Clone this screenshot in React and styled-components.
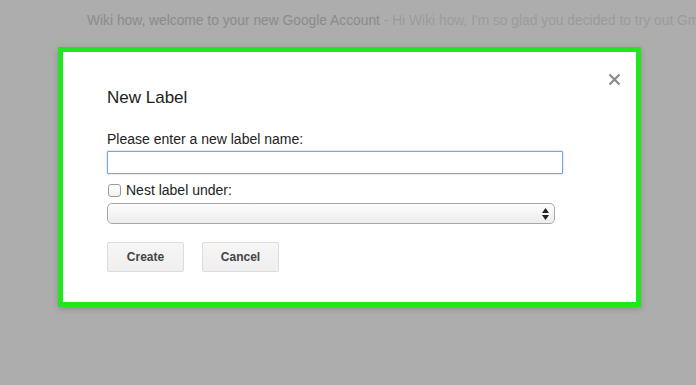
import React from 'react';
import styled, { createGlobalStyle } from 'styled-components';

const GlobalStyle = createGlobalStyle`
	html, body {
		margin: 0;
		padding: 0;
		background: #adadad;
	}
	* {
		box-sizing: border-box;
	}
`;

const Page = styled.div`
	width: 696px;
	height: 385px;
	overflow: hidden;
	background: #adadad;
	font-family: "Liberation Sans", Arial, sans-serif;
`;

const InboxRow = styled.div`
	height: 41px;
	padding: 13px 0 0 87px;
	font-size: 13.8px;
	line-height: 16px;
	white-space: nowrap;
	overflow: hidden;
	border-bottom: 1px solid #a9aea9;
`;

const Subject = styled.span`
	color: #8b8b8b;
`;

const Snippet = styled.span`
	color: #9b9b9b;
`;

const Dialog = styled.div`
	position: relative;
	width: 583px;
	height: 260px;
	margin: 6px 0 0 58px;
	border: 5px solid #1fe61f;
	background: #fff;
	padding: 36px 44px 0;
	box-shadow: 0 2px 6px rgba(0, 0, 0, 0.18);
`;

const Close = styled.button`
	position: absolute;
	top: 19px;
	right: 14px;
	width: 16px;
	height: 16px;
	padding: 0;
	border: none;
	background: none;
	display: flex;
	align-items: center;
	justify-content: center;
`;

const Title = styled.h2`
	margin: 0;
	font-size: 17px;
	line-height: 20px;
	font-weight: normal;
	color: #222;
`;

const FieldLabel = styled.div`
	margin-top: 23px;
	font-size: 14px;
	line-height: 16px;
	color: #222;
`;

const NameInput = styled.input`
	display: block;
	width: 456px;
	height: 23px;
	margin-top: 4px;
	border: 1px solid #78a5e0;
	border-radius: 1px;
	box-shadow: 0 0 2px rgba(110, 160, 230, 0.7);
	outline: none;
	background: #fff;
`;

const CheckRow = styled.label`
	display: flex;
	align-items: center;
	gap: 5px;
	height: 16px;
	margin-top: 8px;
	font-size: 14px;
	line-height: 16px;
	color: #222;
`;

const CheckBox = styled.span`
	width: 13px;
	height: 13px;
	margin-left: 1px;
	border: 1px solid #9a9a9a;
	border-radius: 3px;
	background: linear-gradient(#fff, #f1f1f1);
`;

const SelectBox = styled.div`
	display: flex;
	align-items: center;
	justify-content: flex-end;
	width: 448px;
	height: 21px;
	margin-top: 5px;
	padding-right: 5px;
	border: 1px solid #a8a8a8;
	border-radius: 5px;
	background: linear-gradient(#fdfdfd, #ececec);
`;

const Buttons = styled.div`
	display: flex;
	gap: 18px;
	margin-top: 18px;
`;

const Button = styled.button`
	width: 77px;
	height: 30px;
	padding: 0;
	border: 1px solid #dcdcdc;
	border-radius: 2px;
	background: linear-gradient(#f6f6f6, #efefef);
	font-family: "Liberation Sans", Arial, sans-serif;
	font-size: 12px;
	font-weight: bold;
	color: #444;
`;

const App = () => {
	return (
		<Page>
			<GlobalStyle />
			<InboxRow>
				<Subject>Wiki how, welcome to your new Google Account</Subject>
				<Snippet> - Hi Wiki how, I'm so glad you decided to try out Gmail</Snippet>
			</InboxRow>
			<Dialog>
				<Close aria-label="Close">
					<svg width="13" height="13" viewBox="0 0 13 13">
						<path d="M1.5 1.5 L11.5 11.5 M11.5 1.5 L1.5 11.5" stroke="#8a8a8a" strokeWidth="2.2" />
					</svg>
				</Close>
				<Title>New Label</Title>
				<FieldLabel>Please enter a new label name:</FieldLabel>
				<NameInput type="text" />
				<CheckRow>
					<CheckBox />
					Nest label under:
				</CheckRow>
				<SelectBox>
					<svg width="7" height="12" viewBox="0 0 7 12">
						<path d="M3.5 0 L7 5 L0 5 Z M3.5 12 L7 7 L0 7 Z" fill="#222" />
					</svg>
				</SelectBox>
				<Buttons>
					<Button>Create</Button>
					<Button>Cancel</Button>
				</Buttons>
			</Dialog>
		</Page>
	);
};

export default App;
